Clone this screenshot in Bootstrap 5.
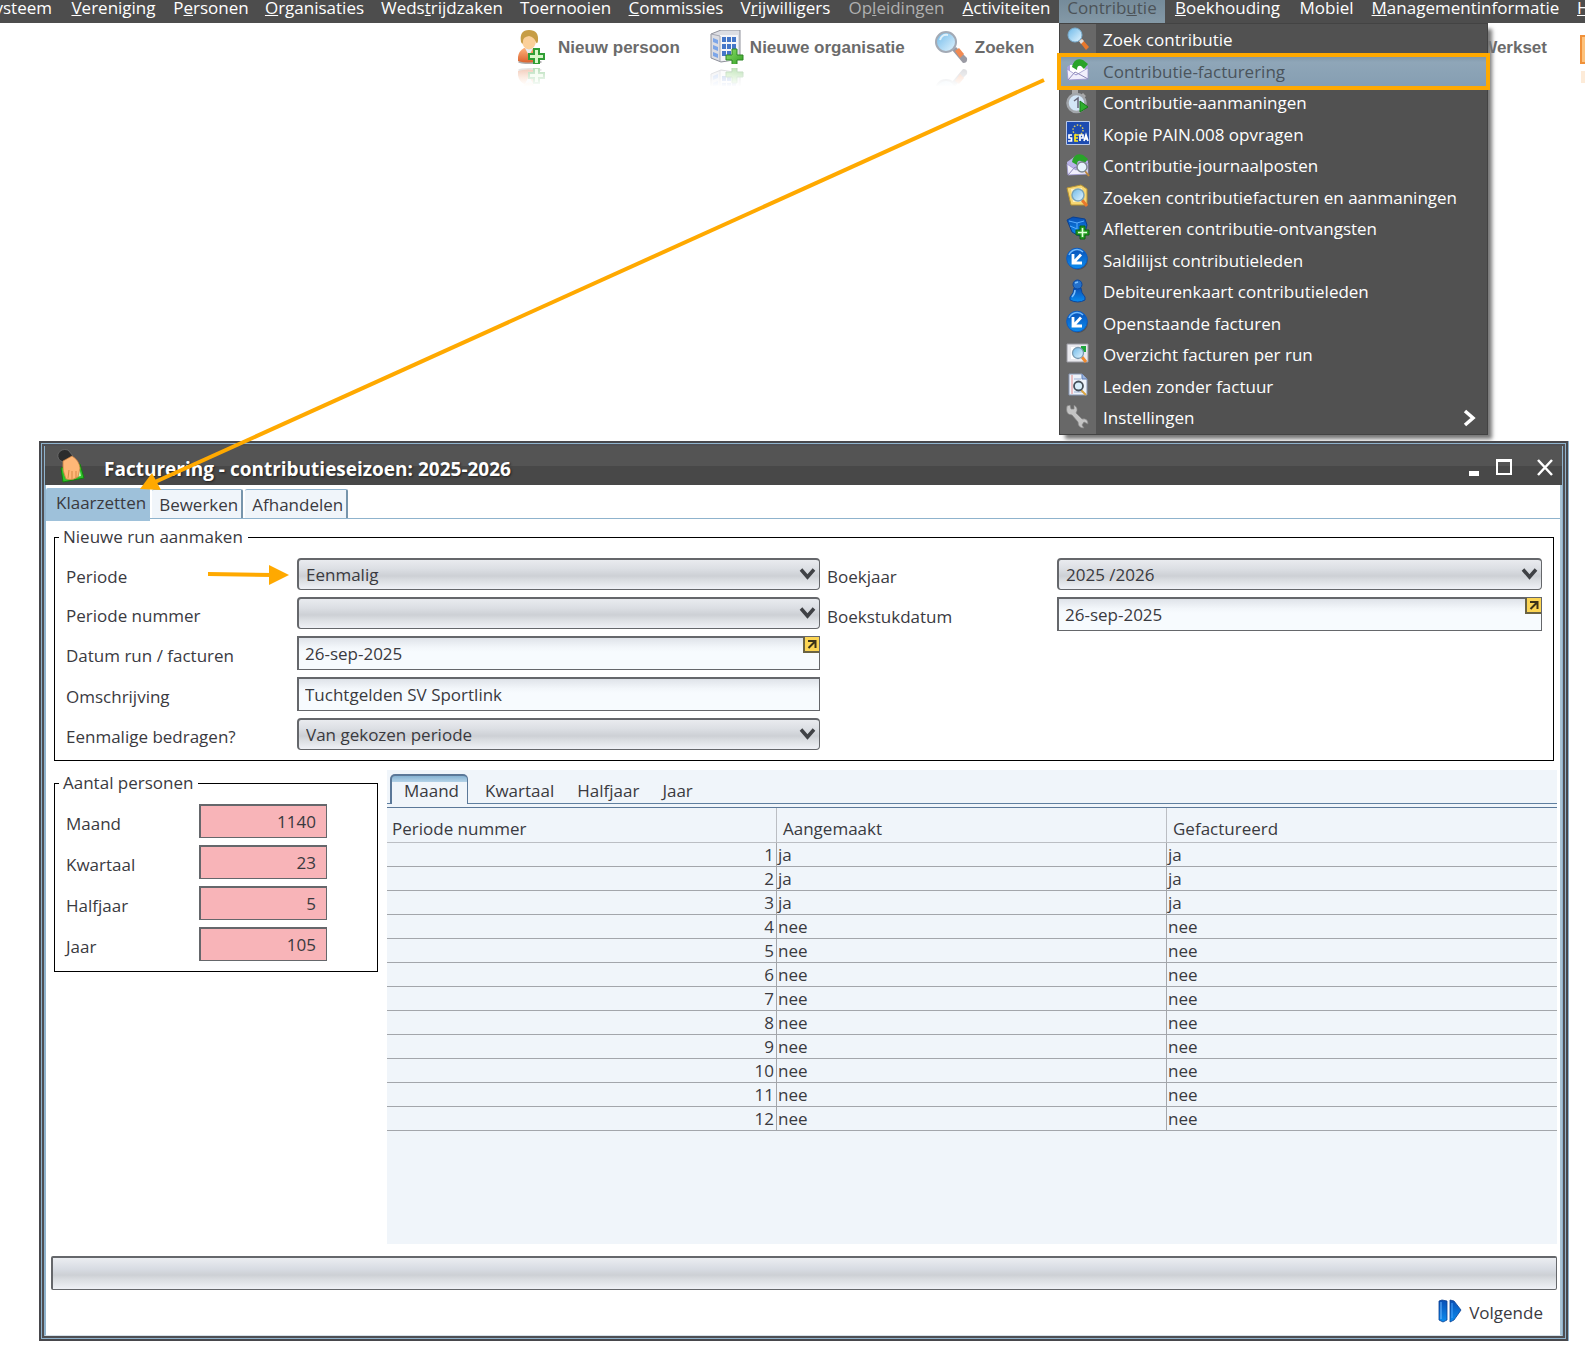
<!DOCTYPE html>
<html lang="nl">
<head>
<meta charset="utf-8">
<meta name="viewport" content="width=device-width, initial-scale=1">
<title>Facturering - contributieseizoen: 2025-2026</title>
<link href="https://cdn.jsdelivr.net/npm/bootstrap@5.3.0/dist/css/bootstrap.min.css" rel="stylesheet">
<style>
  :root { --ink:#3a3a3f; --dark:#4d4d4d; --steel:#65676b; --sky:#8fb3cd; --pale:#f0f5fa; --mark:#ffa900; }
  body { font-family:"Open Sans","Noto Sans",sans-serif; font-size:17px; line-height:22px; color:var(--ink); background:#fff; overflow-x:hidden; }
  svg { display:block; flex:none; }
  /* menu bar */
  .menubar { display:grid; grid-template-columns:61fr 105fr 90fr 117fr 138fr 109fr 112fr 107fr 115fr 105fr 106fr 125fr 73fr 205fr 17fr; background:var(--dark); height:23px; }
  .menubar > li { min-width:0; display:flex; justify-content:center; }
  .menubar > li > a { color:#fff; text-decoration:none; line-height:15px; white-space:nowrap; }
  .menubar > li:first-child { justify-content:flex-end; padding-right:9px; }
  .menubar > li:last-child { justify-content:flex-start; padding-left:9px; }
  .menubar > li.opened { background:linear-gradient(#758b9a,#8499a7); }
  .menubar > li.opened > a { color:#4c5358; }
  .menubar > li.inactive > a { color:#b0b0b0; }
  .submenu { left:0; top:23px; width:429px; min-height:412px; background:linear-gradient(90deg,#686868 36px,#515151 36px); border:1px solid #434343; box-shadow:5px 5px 4px -1px #777; z-index:5; }
  .submenu a { color:#fff; text-decoration:none; padding-left:6px; gap:13px; line-height:30px; white-space:nowrap; }
  .submenu a > svg:first-child { margin-bottom:3px; }
  .submenu li { padding-top:1px; }
  .submenu li.chosen { background:linear-gradient(#7f97a9,#8fa6b8 20%,#859eb2); outline:4px solid var(--mark); outline-offset:-1px; }
  .submenu li.chosen a { color:#4a545c; }
  /* toolbar */
  .tools { padding:7px 0 0 518px; gap:30px; height:62px; font-family:"Liberation Sans",sans-serif; font-weight:700; color:#6b6b6b; }
  .tools button { border:0; background:none; padding:0; color:inherit; font:inherit; line-height:35px; white-space:nowrap; }
  .tools .btn-gap { gap:6px; }
  .tools .last { margin-right:-29px; gap:33px; }
  /* window */
  .frame { margin:356px 17px 11px 39px; border:2px solid #48484c; padding:3px 4px 3px 3px; box-shadow:inset 0 0 0 1px var(--sky), inset 0 0 0 3px #4f4f53, inset 0 0 0 4px var(--sky), 1px 0 0 var(--sky); }
  .titlebar { background:linear-gradient(#545454 50%,#484848 50%); height:39px; padding:0 9px 0 12px; color:#fff; margin-left:1px; }
  .titlebar h1 { font-size:19px; font-weight:700; line-height:24px; margin:6px 0 0 19px; text-shadow:1px 1px 2px #222; }
  .titlebar button { border:0; background:none; padding:0; }
  .titlebar button svg { margin-top:4px; }
  .pane { border-right:2px solid #a9c4d6; border-bottom:1px solid #d5e1e9; border-left:2px solid var(--sky); padding-bottom:9px; background:#fff; }
  .maintabs { padding-top:3px; height:36px; border-bottom:0; background:linear-gradient(var(--sky),var(--sky)) 0 33px/100% 1px no-repeat; gap:2px; }
  .maintabs button { border:0; border-top:1px solid var(--sky); border-right:2px solid #7795ac; border-radius:2px 2px 0 0; background:var(--pale); color:var(--ink); padding:2px 3px 0 7px; line-height:22px; height:29px; margin-top:1px; white-space:nowrap; }
  .maintabs button.active { background:#9ec1da; border-color:#9ec1da; border-right:0; padding:0 4px 5px 10px; height:33px; margin-top:0; }
  .groupbox { border:1px solid #000; margin:0; padding:10px 11px 10px 11px; }
  .groupbox legend { float:none; width:auto; font-size:17px; line-height:22px; margin:0 0 0 -7px; padding:0 5px 0 4px; }
  .run { margin:5px 6px 0 8px; }
  .formgrid { display:grid; grid-template-columns:231fr 523fr 237fr 485fr; }
  .stack { display:flex; flex-direction:column; gap:7px; }
  .fieldrow { position:relative; }
  .fieldrow label { flex:none; padding-top:5px; white-space:nowrap; }
  .leftcol { grid-column:1 / 3; } .rightcol { grid-column:3 / 5; }
  .leftcol label { width:calc(100% * 231 / 754); }
  .rightcol label { width:calc(100% * 237 / 722); padding-left:7px; }
  .ctl { flex:1; min-width:0; position:relative; }
  .ctl select, .ctl input, .count { width:100%; color:var(--ink); border:solid var(--steel); border-width:2px 1px 1px 2px; border-radius:0; padding:0 6px; outline:0; display:block; }
  .ctl select { appearance:none; height:32px; border-radius:4px; padding-left:7px; background:linear-gradient(#e9ebef,#dcdfe4 30%,#cdd0d5 55%,#dcdfe3 72%,#eff1f6); }
  .ctl input { height:34px; background:linear-gradient(#dfe3e9,#f2f6fa 30%,#f7fbfe 45%); }
  .ctl .chev { position:absolute; right:4px; top:10px; pointer-events:none; }
  .ctl .pick { position:absolute; right:1px; top:1px; padding:0; border:solid #6a6344; border-width:0 0 2px 2px; background:#fcd554; }
  .counts { width:324px; flex:none; margin-top:2px; }
  .counts label { width:133px; }
  .count { width:128px; height:34px; background:#f8b4b8; text-align:right; padding-right:10px; }
  .split { margin:9px 3px 0 8px; gap:9px; }
  .panel { background:var(--pale); min-height:474px; padding-top:4px; }
  .subtabs { height:30px; padding-left:3px; box-shadow:inset 0 -1px 0 #5f7f9f; }
  .subtabs button { border:0; background:none; padding:4px 14px 0; color:var(--ink); white-space:nowrap; }
  .subtabs button.active { border:solid #5b7898; border-width:2px 1px 0 2px; border-radius:5px 5px 0 0; background:linear-gradient(#86b3d3,#b5d3e8 6px,var(--pale) 6px); padding:2px 8px 0 12px; margin-right:3px; }
  .subtabs button + button { padding-right:9px; }
  .periods { width:100%; table-layout:fixed; border-collapse:separate; border-spacing:0; margin-top:3px; border-top:1px solid #5b7898; }
  .periods th, .periods td { padding:1px 2px 0 1px; line-height:22px; border-bottom:1px solid #a3a6ab; border-right:1px solid #a3a6ab; font-weight:400; }
  .periods tr > :last-child { border-right:0; }
  .periods th { line-height:26px; padding:8px 6px 0; border-color:#bbbec3; }
  .periods th:first-child { padding-left:5px; }
  .periods td:first-child { text-align:right; }
  .meter { margin:12px 3px 0 5px; height:34px; border:solid var(--steel); border-width:2px 1px 1px 2px; border-radius:2px; background:linear-gradient(#ebedf1,#d8dce3 35%,#cdd0d5 55%,#dcdfe3 72%,#eff1f6); }
  .next { border:0; background:none; padding:0; margin:9px 17px 0 0; color:var(--ink); gap:7px; }
  .next svg { margin-bottom:3px; }
  /* arrows laid over the page */
  .pointer { position:absolute; pointer-events:none; z-index:8; overflow:visible; }
  .long { left:0; top:0; } .short { left:142px; top:6px; }
</style>
<script src="https://cdn.jsdelivr.net/npm/bootstrap@5.3.0/dist/js/bootstrap.bundle.min.js"></script>
</head>
<body>
<!-- shared shapes -->
<svg width="0" height="0" class="position-absolute" aria-hidden="true">
  <defs>
    <linearGradient id="gb" x1="0" y1="0" x2="0" y2="1"><stop offset="0" stop-color="#0a4fb5"/><stop offset="1" stop-color="#0a8df0"/></linearGradient>
    <linearGradient id="gl" x1="0" y1="0" x2="1" y2="1"><stop offset="0" stop-color="#6db8e8"/><stop offset="1" stop-color="#e6f6ff"/></linearGradient>
    <linearGradient id="gg" x1="0" y1="0" x2="1" y2="1"><stop offset="0" stop-color="#8ee06a"/><stop offset="1" stop-color="#2f9e22"/></linearGradient>
    <linearGradient id="gs" x1="0" y1="0" x2="0" y2="1"><stop offset="0" stop-color="#ffb27a"/><stop offset="1" stop-color="#d9622f"/></linearGradient>
    <linearGradient id="gf" x1="0" y1="0" x2="0" y2="1"><stop offset="0" stop-color="#fff" stop-opacity=".3"/><stop offset="1" stop-color="#fff"/></linearGradient>
    <symbol id="chev" viewBox="0 0 17 12"><path d="M2 1.500l6.500 7.500L15 1.500" fill="none" stroke="#3f4145" stroke-width="3.500"/></symbol>
    <symbol id="pick" viewBox="0 0 14 14"><path d="M3 4h7.500v7M10 4.500l-6.500 6.500" fill="none" stroke="#3b3218" stroke-width="2"/></symbol>
    <symbol id="round" viewBox="0 0 24 24"><circle cx="12" cy="13" r="10" fill="#333" opacity=".4"/><circle cx="11" cy="11.500" r="10.300" fill="url(#gb)" stroke="#0b5dc4"/><path d="M3 8a8.500 8.500 0 0 1 14-3" stroke="#6db9ff" stroke-width="1.500" fill="none"/><path d="M7 7v9h9M15 7.500l-7 7.500" fill="none" stroke="#fff" stroke-width="2.800"/></symbol>
    <symbol id="person" viewBox="0 0 34 34"><ellipse cx="12" cy="32" rx="12" ry="2" fill="#777" opacity=".6"/><path d="M0 31q-1-9 6-13h8q7 4 6 13-10 3-20 0z" fill="url(#gs)"/><path d="M7 18l4 8 4-8z" fill="#e5eef8"/><ellipse cx="11" cy="11" rx="7" ry="8.500" fill="#fbd09a"/><path d="M3 12Q1 0 11 0t9 11q-1 4-2 1-2-5-7-6-6 1-6 5 0 5-2 1z" fill="#c79d45"/><path d="M16 19h5v5h5v5h-5v5h-5v-5h-5v-5h5z" fill="#d9f7cb" stroke="#2f9e35" stroke-width="2"/></symbol>
    <symbol id="building" viewBox="0 0 34 34"><path d="M1 4L11 0h19v29l-19 3-10-4z" fill="#dcdde3" stroke="#8f919b"/><path d="M10 5h18v25l-18 1z" fill="#f4f4f8"/><path d="M1 4l9 2v25" fill="none" stroke="#a7a9b4"/><path d="M12 7h4v5h-4zm5 0h4v5h-4zm5 0h4v5h-4zM12 14h4v5h-4zm5 0h4v5h-4zm5 0h4v5h-4zM12 21h4v5h-4zm5 0h4v5h-4z" fill="#4576c8"/><path d="M3 8l5 2v4l-5-2zm0 7l5 2v4l-5-2zm0 7l5 2v4l-5-2z" fill="#7da6e8"/><path d="M22 19h5v6h6v5h-6v6h-5v-6h-6v-5h6z" fill="url(#gg)" stroke="#2f8526"/></symbol>
    <symbol id="lens" viewBox="0 0 34 34"><path d="M17 20l4-3 11 11q1 5-4 5z" fill="#9a9aa3"/><path d="M20 21l4-3 5 6-4 4z" fill="#f28a52"/><circle cx="11" cy="12" r="10" fill="url(#gl)" stroke="#a3aab5" stroke-width="2"/><path d="M5 10q2-6 8-5" stroke="#fff" stroke-width="2" fill="none" opacity=".7"/></symbol>
  </defs>
</svg>

<nav aria-label="Hoofdmenu">
  <ul class="menubar list-unstyled mb-0">
    <li><a href="#"><u>S</u>ysteem</a></li>
    <li><a href="#"><u>V</u>ereniging</a></li>
    <li><a href="#">P<u>e</u>rsonen</a></li>
    <li><a href="#"><u>O</u>rganisaties</a></li>
    <li><a href="#">Weds<u>t</u>rijdzaken</a></li>
    <li><a href="#">Toernooien</a></li>
    <li><a href="#"><u>C</u>ommissies</a></li>
    <li><a href="#">V<u>r</u>ijwilligers</a></li>
    <li class="inactive"><a href="#">Op<u>l</u>eidingen</a></li>
    <li><a href="#"><u>A</u>ctiviteiten</a></li>
    <li class="opened position-relative"><a href="#">Contrib<u>u</u>tie</a>
      <ul class="submenu list-unstyled position-absolute d-flex flex-column mb-0">
        <li class="flex-fill"><a href="#" class="d-flex align-items-center"><svg width="24" height="24"><path d="M13 14l3-2 7 8-3 3z" fill="#e9782c"/><path d="M13 14l3-2 2 2-3 3z" fill="#ddd"/><circle cx="9" cy="8" r="7" fill="url(#gl)" stroke="#7aaed0"/></svg>Zoek contributie</a></li>
        <li class="flex-fill chosen"><a href="#" class="d-flex align-items-center"><svg width="24" height="24"><path d="M1 9l10-7 11 6v13L2 22z" fill="#a9a3df"/><path d="M4 7h15v9H4z" fill="#fff"/><path d="M6 9Q8-1 17 2l5 4-4 5-3-3q-4-1-4 4z" fill="#29a329"/><path d="M1 11l9 6 12-7v11L2 22z" fill="#f1effc" stroke="#9a94cc" stroke-width=".8"/><path d="M2 22l7-8 4 2 9 5" fill="none" stroke="#8d88b8"/></svg>Contributie-facturering</a></li>
        <li class="flex-fill"><a href="#" class="d-flex align-items-center"><svg width="24" height="24"><path d="M6 0h6v5H6zM17 3l3 3-2 2-3-3z" fill="#aaa"/><circle cx="10.500" cy="13" r="9" fill="#d3e6f7" stroke="#a2a6ab" stroke-width="2.500"/><path d="M8 11l4-3v10" fill="none" stroke="#667" stroke-width="1.500"/><path d="M14 11l8 6-8 5z" fill="#2eae2e" stroke="#167a19"/></svg>Contributie-aanmaningen</a></li>
        <li class="flex-fill"><a href="#" class="d-flex align-items-center"><svg width="24" height="24"><path d="M.5.500h23v23H.5z" fill="#1d4bb0" stroke="#b9c9ea"/><circle cx="12" cy="9" r="5" fill="none" stroke="#d6c95c" stroke-width="1.500" stroke-dasharray="1.500 1.600"/><g fill="none" stroke="#fff" stroke-width="1.700"><path d="M6 14H3v3h2.500v3H2M14 20v-6h3v3h-2M18 20l2-6 2 6M19 18h3"/><path d="M12 14H9v6h3M9 17h3" stroke="#ffe81a"/></g></svg>Kopie PAIN.008 opvragen</a></li>
        <li class="flex-fill"><a href="#" class="d-flex align-items-center"><svg width="24" height="24"><path d="M1 9l10-7 11 6v13L2 22z" fill="#b8b2e8"/><path d="M6 9Q8-1 17 2l5 4-4 5-3-3q-4-1-4 4z" fill="#29a329"/><path d="M1 11l9 6 12-7v11L2 22z" fill="#f1effc" stroke="#9a94cc" stroke-width=".8"/><path d="M2 22l7-8 4 2" fill="none" stroke="#8d88b8"/><path d="M19 18l4 5" stroke="#c08a3e" stroke-width="2"/><circle cx="16" cy="14" r="5" fill="#e7f4fb" stroke="#7f8790" stroke-width="1.500"/></svg>Contributie-journaalposten</a></li>
        <li class="flex-fill"><a href="#" class="d-flex align-items-center"><svg width="24" height="24"><path d="M1 4l14-3 6 4v16H5z" fill="#f7d774" stroke="#b89433"/><path d="M5 5l11-1 1 14H7z" fill="#fff0bb"/><path d="M16 16l5 6" stroke="#e9782c" stroke-width="3"/><circle cx="12" cy="11" r="6" fill="url(#gl)" stroke="#7aa4b8" stroke-width="1.500"/></svg>Zoeken contributiefacturen en aanmaningen</a></li>
        <li class="flex-fill"><a href="#" class="d-flex align-items-center"><svg width="24" height="24"><path d="M1 4l6-3 12 2 2 6-2 8-6 3-7-4z" fill="url(#gb)" stroke="#0a3f90"/><path d="M3 5l8 2 7-2M11 7v9M4 10l7 3" stroke="#59adff" fill="none"/><path d="M14 10h5v4h4v5h-4v4h-5v-4h-4v-5h4z" fill="#27a023" stroke="#0c6311"/><path d="M16.500 12v9M12 16.500h9" stroke="#e1ffd8" stroke-width="1.600"/></svg>Afletteren contributie-ontvangsten</a></li>
        <li class="flex-fill"><a href="#" class="d-flex align-items-center"><svg width="24" height="24"><use href="#round"/></svg>Saldilijst contributieleden</a></li>
        <li class="flex-fill"><a href="#" class="d-flex align-items-center"><svg width="24" height="24"><path d="M8 9h7q0 5 4 9v3q-7 4-15 0v-3q4-4 4-9z" fill="url(#gb)" stroke="#0b479e"/><circle cx="11.500" cy="5.500" r="4.500" fill="#2470ca" stroke="#0b479e"/><path d="M9 4l3-1M9 11q0 4-3 7" fill="none" stroke="#7cc0ff" stroke-width="1.500"/></svg>Debiteurenkaart contributieleden</a></li>
        <li class="flex-fill"><a href="#" class="d-flex align-items-center"><svg width="24" height="24"><use href="#round"/></svg>Openstaande facturen</a></li>
        <li class="flex-fill"><a href="#" class="d-flex align-items-center"><svg width="24" height="24"><path d="M1 2h21v18H1z" fill="#e9e9ee" stroke="#9b9ba3"/><path d="M15 4h5v6h-5z" fill="#1da53a"/><path d="M5 5h9v12H5z" fill="#fff"/><path d="M16 15l4 5" stroke="#f08a2f" stroke-width="3"/><circle cx="12" cy="11" r="5.500" fill="url(#gl)" stroke="#7a9ab0" stroke-width="1.300"/></svg>Overzicht facturen per run</a></li>
        <li class="flex-fill"><a href="#" class="d-flex align-items-center"><svg width="24" height="24"><path d="M3 1h13l5 5v16H3z" fill="#eef3fb" stroke="#8797b4"/><path d="M16 1v5h5" fill="#9cb6e0" stroke="#5d7db5"/><path d="M6 2v19" stroke="#e58c8c"/><path d="M8 6h7M8 19h10" stroke="#9db3d6"/><path d="M15 17l5 5" stroke="#d9a441" stroke-width="2"/><circle cx="12.500" cy="13" r="4.500" fill="#d9eefa" stroke="#46505a" stroke-width="1.800"/></svg>Leden zonder factuur</a></li>
        <li class="flex-fill"><a href="#" class="d-flex align-items-center pe-2"><svg width="24" height="24"><path d="M2 2l3-1 1 4 3 0 0-4q5 3 2 8l6 6q6-1 6 5l-4-2-2 3 2 3q-6 0-6-6L7 11Q0 11 2 2z" transform="translate(-1 -1)" fill="#c4c4c4" stroke="#858585" stroke-width=".7"/></svg><span class="flex-fill">Instellingen</span><svg width="18" height="18"><path d="M4 2l8 7-8 7" fill="none" stroke="#fff" stroke-width="3.500"/></svg></a></li>
      </ul>
    </li>
    <li><a href="#"><u>B</u>oekhouding</a></li>
    <li><a href="#">Mobiel</a></li>
    <li><a href="#"><u>M</u>anagementinformatie</a></li>
    <li><a href="#"><u>H</u>elp</a></li>
  </ul>
</nav>

<div class="tools d-flex align-items-start">
  <button type="button" class="btn-gap d-flex"><svg width="34" height="56"><use href="#person" width="34" height="34"/><g transform="translate(0 72) scale(1 -1)" opacity=".5"><use href="#person" width="34" height="34"/></g><path d="M0 37h34v20H0z" fill="url(#gf)"/></svg>Nieuw persoon</button>
  <button type="button" class="btn-gap d-flex"><svg width="34" height="56"><use href="#building" width="34" height="34"/><g transform="translate(0 72) scale(1 -1)" opacity=".5"><use href="#building" width="34" height="34"/></g><path d="M0 37h34v20H0z" fill="url(#gf)"/></svg>Nieuwe organisatie</button>
  <button type="button" class="btn-gap d-flex"><svg width="34" height="56"><use href="#lens" width="34" height="34"/><g transform="translate(0 72) scale(1 -1)" opacity=".5"><use href="#lens" width="34" height="34"/></g><path d="M0 37h34v20H0z" fill="url(#gf)"/></svg>Zoeken</button>
  <button type="button" class="last d-flex ms-auto">Werkset<svg width="34" height="56"><path d="M1 6h32v27H1z" fill="#fdc27c" stroke="#f0913a" stroke-width="2"/><path d="M1 41h32v12H1z" fill="#fdebd8"/></svg></button>
</div>

<svg class="pointer long" width="1100" height="500" aria-hidden="true"><path d="M1044 80L155 482" stroke="#ffa900" stroke-width="4"/><path d="M140 489l12-16 9 17z" fill="#ffa900"/></svg>

<main class="frame">
  <header class="titlebar d-flex align-items-center">
    <svg width="28" height="34" viewBox="0 0 28 34"><path d="M4 19l19-4 4 14-21 4z" fill="#2fc22a" stroke="#14800f"/><path d="M8 21l14-3 2 9-14 3z" fill="#c9f5b8"/><path d="M1 5q3-6 10-4l5 6-10 6q-6-2-5-8z" fill="#2c2c2c" stroke="#777" stroke-width=".7"/><path d="M6 12l9-5q7 4 8 12l-2 9q-5 4-12 2-4-8-3-18z" fill="#ffb777" stroke="#c97b3b" stroke-width=".7"/><path d="M11 29l1-8M15 30v-8M19 29v-7" stroke="#d68745"/></svg>
    <h1 class="flex-fill">Facturering - contributieseizoen: 2025-2026</h1>
    <button type="button" aria-label="Minimaliseren"><svg width="26" height="24"><path d="M0 15h10v5H0z" fill="#fff"/></svg></button>
    <button type="button" aria-label="Maximaliseren"><svg width="42" height="24"><path d="M2 4h14v14H2z" fill="none" stroke="#fff" stroke-width="2"/><path d="M1 3h16v3H1z" fill="#fff"/></svg></button>
    <button type="button" aria-label="Sluiten"><svg width="16" height="24"><path d="M1 4l14 15M15 4L1 19" stroke="#fff" stroke-width="2.500"/></svg></button>
  </header>

  <div class="pane">
    <div class="maintabs d-flex align-items-start" role="tablist">
      <button type="button" role="tab" class="active" aria-selected="true">Klaarzetten</button>
      <button type="button" role="tab">Bewerken</button>
      <button type="button" role="tab">Afhandelen</button>
    </div>

    <fieldset class="groupbox run">
      <legend>Nieuwe run aanmaken</legend>
      <div class="formgrid">
        <div class="leftcol stack">
          <div class="fieldrow d-flex align-items-center"><label for="f1">Periode</label>
            <svg class="pointer short" width="82" height="22" aria-hidden="true"><path d="M0 10l64 1" stroke="#ffa900" stroke-width="4"/><path d="M61 1l20 10-20 10z" fill="#ffa900"/></svg>
            <div class="ctl"><select id="f1"><option>Eenmalig</option></select><svg class="chev" width="17" height="12"><use href="#chev"/></svg></div></div>
          <div class="fieldrow d-flex align-items-center"><label for="f2">Periode nummer</label>
            <div class="ctl"><select id="f2"><option></option></select><svg class="chev" width="17" height="12"><use href="#chev"/></svg></div></div>
          <div class="fieldrow d-flex align-items-center"><label for="f3">Datum run / facturen</label>
            <div class="ctl"><input id="f3" type="text" value="26-sep-2025"><button type="button" class="pick" aria-label="Kies datum"><svg width="14" height="14"><use href="#pick"/></svg></button></div></div>
          <div class="fieldrow d-flex align-items-center"><label for="f4">Omschrijving</label>
            <div class="ctl"><input id="f4" type="text" value="Tuchtgelden SV Sportlink"></div></div>
          <div class="fieldrow d-flex align-items-center"><label for="f5">Eenmalige bedragen?</label>
            <div class="ctl"><select id="f5"><option>Van gekozen periode</option></select><svg class="chev" width="17" height="12"><use href="#chev"/></svg></div></div>
        </div>
        <div class="rightcol stack">
          <div class="fieldrow d-flex align-items-center"><label for="f6">Boekjaar</label>
            <div class="ctl"><select id="f6"><option>2025 /2026</option></select><svg class="chev" width="17" height="12"><use href="#chev"/></svg></div></div>
          <div class="fieldrow d-flex align-items-center"><label for="f7">Boekstukdatum</label>
            <div class="ctl"><input id="f7" type="text" value="26-sep-2025"><button type="button" class="pick" aria-label="Kies datum"><svg width="14" height="14"><use href="#pick"/></svg></button></div></div>
        </div>
      </div>
    </fieldset>

    <div class="split d-flex align-items-start">
      <fieldset class="groupbox counts">
        <legend>Aantal personen</legend>
        <div class="stack">
          <div class="fieldrow d-flex align-items-center"><label for="n1">Maand</label><input class="count" id="n1" type="text" value="1140"></div>
          <div class="fieldrow d-flex align-items-center"><label for="n2">Kwartaal</label><input class="count" id="n2" type="text" value="23"></div>
          <div class="fieldrow d-flex align-items-center"><label for="n3">Halfjaar</label><input class="count" id="n3" type="text" value="5"></div>
          <div class="fieldrow d-flex align-items-center"><label for="n4">Jaar</label><input class="count" id="n4" type="text" value="105"></div>
        </div>
      </fieldset>
      <section class="panel flex-fill">
        <div class="subtabs d-flex" role="tablist">
          <button type="button" role="tab" class="active" aria-selected="true">Maand</button>
          <button type="button" role="tab">Kwartaal</button>
          <button type="button" role="tab">Halfjaar</button>
          <button type="button" role="tab">Jaar</button>
        </div>
        <table class="periods">
          <thead><tr><th scope="col">Periode nummer</th><th scope="col">Aangemaakt</th><th scope="col">Gefactureerd</th></tr></thead>
          <tbody>
            <tr><td>1</td><td>ja</td><td>ja</td></tr>
            <tr><td>2</td><td>ja</td><td>ja</td></tr>
            <tr><td>3</td><td>ja</td><td>ja</td></tr>
            <tr><td>4</td><td>nee</td><td>nee</td></tr>
            <tr><td>5</td><td>nee</td><td>nee</td></tr>
            <tr><td>6</td><td>nee</td><td>nee</td></tr>
            <tr><td>7</td><td>nee</td><td>nee</td></tr>
            <tr><td>8</td><td>nee</td><td>nee</td></tr>
            <tr><td>9</td><td>nee</td><td>nee</td></tr>
            <tr><td>10</td><td>nee</td><td>nee</td></tr>
            <tr><td>11</td><td>nee</td><td>nee</td></tr>
            <tr><td>12</td><td>nee</td><td>nee</td></tr>
          </tbody>
        </table>
      </section>
    </div>

    <div class="meter" role="progressbar" aria-label="Voortgang" aria-valuenow="0" aria-valuemin="0" aria-valuemax="100"></div>
    <div class="d-flex justify-content-end">
      <button type="button" class="next d-flex align-items-center"><svg width="24" height="24"><path d="M1 2l3-1 5 1v19l-4 2-4-2z" fill="url(#gb)" stroke="#0a3f90" stroke-width=".8"/><path d="M3 3v17" stroke="#6fb9ff"/><path d="M12 1l4 1 7 9-7 10-4 2z" fill="url(#gb)" stroke="#0a3f90" stroke-width=".8"/><path d="M14 4v15" stroke="#4aa5ff"/></svg>Volgende</button>
    </div>
  </div>
</main>
</body>
</html>
